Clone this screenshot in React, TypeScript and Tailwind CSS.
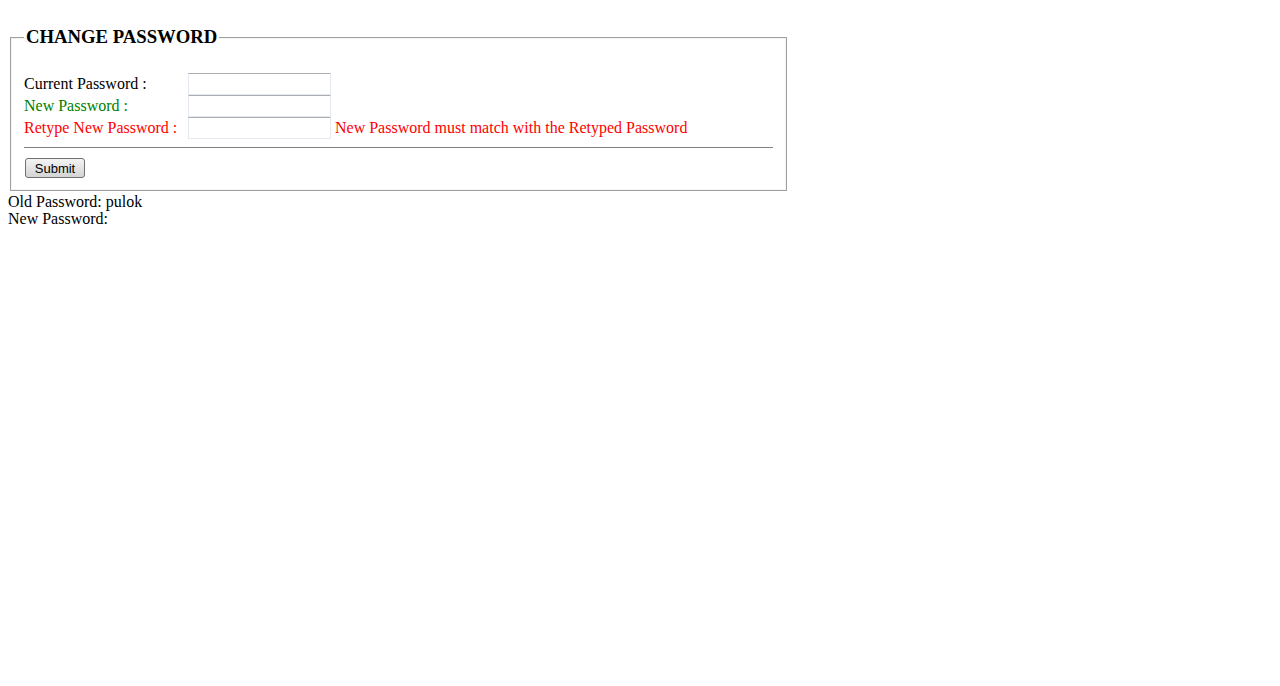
export default function App() {
  const serif = { fontFamily: '"Liberation Serif", "Times New Roman", serif' };
  return (
    <div className="min-h-screen bg-white px-2 pt-[26px] text-[16px] text-black" style={serif}>
      <fieldset className="mx-[2px] w-[777px] border border-[#a0a0a0] px-[13px] pb-[12px] pt-[6px] shadow-[inset_0_0_0_1px_#f4f4f4]">
        <legend className="px-[2px] text-[18.72px] font-bold leading-[22px]">CHANGE PASSWORD</legend>

        <div className="mt-[19px] flex flex-col">
          <div className="flex h-[22px] items-center">
            <span className="w-[164px]">Current Password :</span>
            <input type="password" className="h-[22px] w-[143px] border border-[#e3e9ef] border-t-[#abadb3] bg-white" />
          </div>
          <div className="flex h-[22px] items-center">
            <span className="w-[164px] text-[#008000]">New Password :</span>
            <input type="password" className="h-[22px] w-[143px] border border-[#e3e9ef] border-t-[#abadb3] bg-white" />
          </div>
          <div className="flex h-[22px] items-center">
            <span className="w-[164px] text-[#ff0000]">Retype New Password :</span>
            <input type="password" className="h-[22px] w-[143px] border border-[#e3e9ef] border-t-[#abadb3] bg-white" />
            <span className="ml-[4px] text-[#ff0000]">New Password must match with the Retyped Password</span>
          </div>
        </div>

        <hr className="mt-[8px] border-t border-[#808080]" />

        <button
          type="button"
          className="ml-[1px] mt-[10px] flex h-[20px] w-[60px] items-center justify-center rounded-[3px] border border-[#707070] bg-gradient-to-b from-[#f4f4f4] to-[#d4d4d4] text-[13px] leading-none"
          style={{ fontFamily: '"Liberation Sans", Arial, sans-serif' }}
        >
          Submit
        </button>
      </fieldset>

      <div className="leading-[17px] pt-[2px]">
        <div>Old Password: pulok</div>
        <div>New Password:</div>
      </div>
    </div>
  );
}
